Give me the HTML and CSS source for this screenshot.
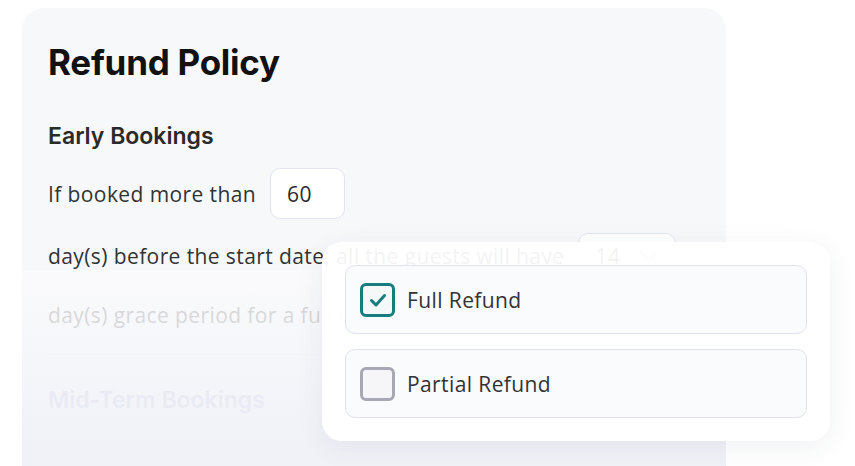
FILE: index.html
```html
<!DOCTYPE html>
<html lang="en">
<head>
  <meta charset="UTF-8">
  <meta name="viewport" content="width=device-width, initial-scale=1.0">
  <title>Refund Policy</title>
  <link rel="stylesheet" href="styles.css">
</head>
<body>
  <div class="card">
    <h1>Refund Policy</h1>

    <h2>Early Bookings</h2>
    <div class="row">
      <span>If booked more than</span>
      <div class="field">60</div>
    </div>
    <div class="row row-select">
      <span>day(s) before the start date, all the guests will have</span>
      <div class="field select">
        <span>14</span>
        <svg width="20" height="12" viewBox="0 0 20 12"><path d="M2 2 L10 10 L18 2" fill="none" stroke="#c9ccd8" stroke-width="2" stroke-linecap="round" stroke-linejoin="round"/></svg>
      </div>
    </div>
    <p class="row-text">day(s) grace period for a full refund.</p>

    <hr class="divider">

    <h2>Mid-Term Bookings</h2>

    <div class="fade"></div>
  </div>

  <div class="popup">
    <div class="option">
      <span class="check checked">
        <svg width="22" height="22" viewBox="0 0 22 22"><path d="M4.5 11.5 L9 16 L17.5 6.5" fill="none" stroke="#167c7e" stroke-width="3" stroke-linecap="round" stroke-linejoin="round"/></svg>
      </span>
      <span>Full Refund</span>
    </div>
    <div class="option">
      <span class="check"></span>
      <span>Partial Refund</span>
    </div>
  </div>
</body>
</html>
```

FILE: styles.css
```css
body {
  font-family: 'Open Sans', 'Noto Sans', sans-serif;
  background: #ffffff;
  margin: 0;
  padding: 8px 0 0 22px;
  height: 466px;
  box-sizing: border-box;
  overflow: hidden;
  position: relative;
  color: #333333;
}

.card {
  position: relative;
  width: 704px;
  height: 520px;
  box-sizing: border-box;
  padding: 32px 26px 0 26px;
  background: #f7f8fa;
  border-radius: 22px;
  overflow: hidden;
}

h1 {
  margin: 0;
  font-family: Inter, sans-serif;
  font-size: 35px;
  line-height: 44px;
  font-weight: 700;
  letter-spacing: -0.25px;
  color: #111111;
}

h2 {
  margin: 37px 0 0 0;
  font-family: Inter, sans-serif;
  font-size: 23px;
  line-height: 30px;
  font-weight: 600;
  color: #2a2a2a;
}

.row {
  display: flex;
  align-items: center;
  gap: 14px;
  margin-top: 17px;
  font-size: 21px;
  letter-spacing: 0.4px;
}

.row-select {
  margin-top: 14px;
}

.field {
  display: flex;
  align-items: center;
  height: 51px;
  width: 75px;
  box-sizing: border-box;
  padding: 0 16px;
  background: #ffffff;
  border: 1.5px solid #e1e3f1;
  border-radius: 10px;
  font-size: 21px;
  color: #2a2a2a;
}

.select {
  width: 98px;
  height: 45px;
  justify-content: space-between;
}

.row-text {
  margin: 23px 0 0 0;
  font-size: 21px;
  line-height: 28px;
  letter-spacing: 0.4px;
}

.divider {
  margin: 25px 0 0 0;
  border: none;
  border-top: 1px solid #e6e7ec;
}

.divider + h2 {
  margin-top: 30px;
  color: #9aa3c8;
}

.fade {
  position: absolute;
  left: 0;
  right: 0;
  top: 262px;
  bottom: 0;
  background: linear-gradient(rgba(251, 251, 253, 0.8), rgba(240, 241, 247, 0.93) 70%);
}

.popup {
  position: absolute;
  left: 322px;
  top: 242px;
  width: 508px;
  height: 199px;
  box-sizing: border-box;
  padding: 23px;
  display: flex;
  flex-direction: column;
  gap: 15px;
  background: rgba(255, 255, 255, 0.94);
  border-radius: 20px;
  box-shadow: 0 6px 28px rgba(40, 50, 90, 0.07);
}

.option {
  display: flex;
  align-items: center;
  gap: 12px;
  height: 69px;
  box-sizing: border-box;
  padding: 0 14px;
  background: rgba(249, 250, 253, 0.8);
  border: 1.5px solid #dfe1ef;
  border-radius: 10px;
  font-size: 21px;
  letter-spacing: 0.4px;
  color: #333333;
}

.check {
  display: flex;
  align-items: center;
  justify-content: center;
  width: 35px;
  height: 34px;
  box-sizing: border-box;
  border: 3px solid #a7a8b4;
  border-radius: 6px;
  background: #f6f6f9;
}

.check.checked {
  border-color: #167c7e;
  background: #f5f8f9;
}
```
